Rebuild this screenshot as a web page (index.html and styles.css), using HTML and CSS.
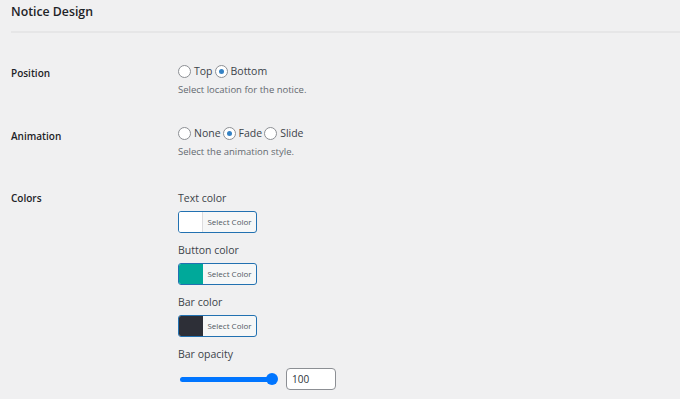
FILE: index.html
```html
<!DOCTYPE html>
<html>
<head>
<meta charset="utf-8">
<link rel="stylesheet" href="styles.css">
</head>
<body>
<div class="wrap">
  <h2 class="title">Notice Design</h2>
  <div class="sep"></div>
  <div class="row row-position">
    <div class="label">Position</div>
    <div class="field">
      <div class="radios">
        <label class="opt"><span class="radio"></span>Top</label>
        <label class="opt"><span class="radio checked"></span>Bottom</label>
      </div>
      <p class="desc">Select location for the notice.</p>
    </div>
  </div>
  <div class="row row-animation">
    <div class="label">Animation</div>
    <div class="field">
      <div class="radios">
        <label class="opt"><span class="radio"></span>None</label>
        <label class="opt"><span class="radio checked"></span>Fade</label>
        <label class="opt"><span class="radio"></span>Slide</label>
      </div>
      <p class="desc">Select the animation style.</p>
    </div>
  </div>
  <div class="row row-colors">
    <div class="label">Colors</div>
    <div class="field colors">
      <div class="sub">Text color</div>
      <div class="colorbtn"><span class="swatch sw-white"></span><span class="btntext">Select Color</span></div>
      <div class="sub">Button color</div>
      <div class="colorbtn"><span class="swatch sw-teal"></span><span class="btntext">Select Color</span></div>
      <div class="sub">Bar color</div>
      <div class="colorbtn"><span class="swatch sw-dark"></span><span class="btntext">Select Color</span></div>
      <div class="sub">Bar opacity</div>
      <div class="opacity">
        <div class="slider"><div class="track"></div><div class="thumb"></div></div>
        <div class="num">100</div>
      </div>
    </div>
  </div>
</div>
</body>
</html>
```

FILE: styles.css
```css
html, body {
  margin: 0;
  padding: 0;
  background: #f0f0f1;
  font-family: "Open Sans", "Noto Sans", sans-serif;
  color: #1d2327;
}
.wrap {
  padding-left: 11px;
}
.title {
  margin: 0;
  padding-top: 2px;
  font-size: 12.3px;
  font-weight: 600;
  line-height: 20px;
  height: 29px;
  color: #1d2327;
}
.sep {
  height: 2px;
  background: #e6e6e7;
}
.row {
  display: flex;
}
.label {
  width: 167px;
  flex: none;
  font-size: 10px;
  font-weight: 600;
  color: #1d2327;
  line-height: 14px;
}
.row-position { padding-top: 31px; }
.row-position .label { padding-top: 2px; }
.row-animation { padding-top: 29px; }
.row-animation .label { padding-top: 3px; }
.row-colors { padding-top: 29px; }
.row-colors .label { padding-top: 3px; }
.radios {
  display: flex;
  align-items: center;
  height: 14px;
  font-size: 10.5px;
  color: #3c434a;
}
.opt {
  display: flex;
  align-items: center;
  margin-right: 2px;
}
.radio {
  width: 11px;
  height: 11px;
  border: 1px solid #8c8f94;
  border-radius: 50%;
  background: #fff;
  margin-right: 3px;
  position: relative;
}
.radio.checked::after {
  content: "";
  position: absolute;
  left: 3px;
  top: 3px;
  width: 5px;
  height: 5px;
  border-radius: 50%;
  background: #3582c4;
}
.desc {
  margin: 5px 0 0;
  font-size: 9.5px;
  line-height: 14px;
  color: #646970;
}
.colors {
  display: flex;
  flex-direction: column;
  align-items: flex-start;
  padding-top: 3px;
}
.sub {
  font-size: 10.5px;
  line-height: 14px;
  color: #3c434a;
  margin-bottom: 6px;
}
.colorbtn {
  display: flex;
  width: 77px;
  height: 20px;
  border: 1px solid #2271b1;
  border-radius: 3px;
  overflow: hidden;
  background: #f6f7f7;
  margin-bottom: 10px;
}
.swatch {
  width: 23px;
  border-right: 1px solid #dcdcde;
}
.sw-white { background: #ffffff; }
.sw-teal { background: #00a99a; border-right-color: #00a99a; }
.sw-dark { background: #2d2f37; border-right-color: #2d2f37; }
.btntext {
  flex: 1;
  font-size: 8px;
  line-height: 20px;
  color: #50575e;
  text-align: center;
}
.opacity {
  display: flex;
  align-items: center;
  margin-top: 1px;
}
.slider {
  position: relative;
  width: 98px;
  height: 12px;
  margin-left: 2px;
  margin-right: 8px;
}
.track {
  position: absolute;
  left: 0;
  right: 2px;
  top: 4px;
  height: 5px;
  border-radius: 3px;
  background: #0075ff;
}
.thumb {
  position: absolute;
  right: 0;
  top: 0;
  width: 12px;
  height: 12px;
  border-radius: 50%;
  background: #0075ff;
}
.num {
  width: 43px;
  height: 20px;
  border: 1px solid #8c8f94;
  border-radius: 4px;
  background: #fff;
  font-size: 10px;
  line-height: 20px;
  padding-left: 5px;
  color: #2c3338;
}
```
